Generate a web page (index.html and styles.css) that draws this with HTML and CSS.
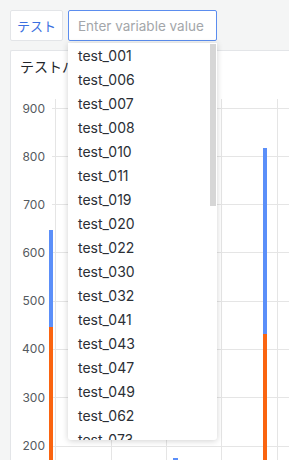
FILE: index.html
```html
<!DOCTYPE html>
<html>
<head>
<meta charset="utf-8">
<link rel="stylesheet" href="styles.css">
</head>
<body>
<div class="toolbar">
  <button class="var-label">テスト</button>
  <div class="var-input-wrap">
    <input class="var-input" type="text" placeholder="Enter variable value">
    <div class="dropdown">
      <ul class="options">
        <li>test_001</li><li>test_006</li><li>test_007</li><li>test_008</li>
        <li>test_010</li><li>test_011</li><li>test_019</li><li>test_020</li>
        <li>test_022</li><li>test_030</li><li>test_032</li><li>test_041</li>
        <li>test_043</li><li>test_047</li><li>test_049</li><li>test_062</li>
        <li>test_073</li>
      </ul>
      <div class="scroll-thumb"></div>
    </div>
  </div>
</div>
<div class="panel">
  <div class="panel-title">テストパネル</div>
  <svg class="chart" width="278" height="370" viewBox="11 90 278 370">
    <g stroke="#e5e5e5" stroke-width="1">
      <line x1="52" x2="289" y1="108.5" y2="108.5"/>
      <line x1="52" x2="289" y1="156.5" y2="156.5"/>
      <line x1="52" x2="289" y1="204.5" y2="204.5"/>
      <line x1="52" x2="289" y1="252.5" y2="252.5"/>
      <line x1="52" x2="289" y1="301.5" y2="301.5"/>
      <line x1="52" x2="289" y1="349.5" y2="349.5"/>
      <line x1="52" x2="289" y1="397.5" y2="397.5"/>
      <line x1="52" x2="289" y1="446.5" y2="446.5"/>
      <line x1="55.5" x2="55.5" y1="99" y2="460"/>
      <line x1="111.5" x2="111.5" y1="99" y2="460"/>
      <line x1="166.5" x2="166.5" y1="99" y2="460"/>
      <line x1="221.5" x2="221.5" y1="99" y2="460"/>
      <line x1="277.5" x2="277.5" y1="99" y2="460"/>
    </g>
    <g class="ylabels" text-anchor="end">
      <text x="45" y="112.5">900</text>
      <text x="45" y="160.5">800</text>
      <text x="45" y="208.5">700</text>
      <text x="45" y="256.5">600</text>
      <text x="45" y="305">500</text>
      <text x="45" y="353">400</text>
      <text x="45" y="401.5">300</text>
      <text x="45" y="450">200</text>
    </g>
    <rect x="49" y="230" width="4" height="97" fill="#5b8ff9"/>
    <rect x="49" y="327" width="4" height="140" fill="#fa6410"/>
    <rect x="263" y="148" width="4" height="186" fill="#5b8ff9"/>
    <rect x="263" y="334" width="4" height="140" fill="#fa6410"/>
    <rect x="173" y="458" width="5" height="4" fill="#5b8ff9"/>
  </svg>
</div>
</body>
</html>
```
FILE: styles.css
```css
html, body {
  margin: 0;
  padding: 0;
}
body {
  background: #f4f5f5;
  width: 289px;
  height: 460px;
  overflow: hidden;
  font-family: Inter, "Noto Sans CJK JP", sans-serif;
}
.toolbar {
  display: flex;
  gap: 5px;
  padding: 10px 10px 0 10px;
  height: 31px;
}
.var-label {
  box-sizing: border-box;
  width: 53px;
  height: 31px;
  background: #fff;
  border: 1px solid #e3e5e8;
  border-radius: 2px;
  color: #3b6fe0;
  font-family: Inter, "Noto Sans CJK JP", sans-serif;
  font-size: 13px;
  padding: 0;
  margin: 0;
}
.var-input-wrap {
  position: relative;
  width: 149px;
}
.var-input {
  box-sizing: border-box;
  width: 149px;
  height: 31px;
  border: 1px solid #5b8def;
  border-radius: 2px;
  padding: 0 0 0 9px;
  margin: 0;
  font-family: Inter, sans-serif;
  font-size: 13.5px;
  color: #333;
  outline: none;
  background: #fff;
}
.var-input::placeholder {
  color: #a3a6aa;
}
.dropdown {
  position: absolute;
  left: 0;
  top: 33px;
  width: 149px;
  height: 397px;
  background: #fff;
  box-shadow: 0 1px 6px rgba(0, 0, 0, 0.18);
  border-radius: 0 0 3px 3px;
  overflow: hidden;
  z-index: 10;
}
.options {
  list-style: none;
  margin: 0;
  padding: 1px 0 0 0;
}
.options li {
  height: 24px;
  line-height: 24px;
  padding-left: 10px;
  font-size: 14px;
  color: #2b2f36;
}
.scroll-thumb {
  position: absolute;
  right: 1px;
  top: 1px;
  width: 6px;
  height: 162px;
  background: #d6d6d6;
}
.panel {
  margin: 9px 0 0 10px;
  height: 420px;
  background: #fff;
  border: 1px solid #e3e5e8;
  border-right: none;
  border-radius: 2px 0 0 2px;
}
.panel-title {
  height: 39px;
  box-sizing: border-box;
  padding: 6px 0 0 9px;
  line-height: 20px;
  font-size: 14px;
  color: #22252a;
}
.chart {
  display: block;
}
.ylabels text {
  font-family: Inter, sans-serif;
  font-size: 12px;
  fill: #555a60;
}
```
